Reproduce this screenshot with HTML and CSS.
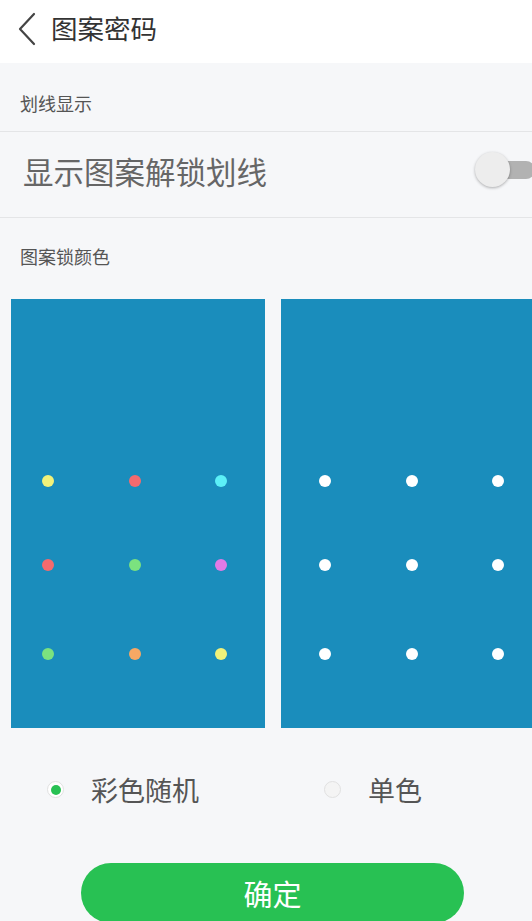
FILE: index.html
```html
<!DOCTYPE html>
<html lang="zh">
<head>
<meta charset="utf-8">
<link rel="stylesheet" href="styles.css">
</head>
<body>
<div class="page">
  <header class="topbar">
    <svg class="back" width="20" height="34" viewBox="0 0 20 34"><path d="M17 2 L3 17 L17 32" fill="none" stroke="#444" stroke-width="2.2" stroke-linecap="round" stroke-linejoin="round"/></svg>
    <span class="title">图案密码</span>
  </header>
  <div class="section-label first">划线显示</div>
  <div class="row">
    <span class="row-text">显示图案解锁划线</span>
    <span class="toggle"><span class="track"></span><span class="knob"></span></span>
  </div>
  <div class="section-label second">图案锁颜色</div>
  <div class="panels">
    <div class="panel left">
      <div class="dots r1"><i style="background:#f1f27a"></i><i style="background:#f46a6e"></i><i style="background:#5cf0f7"></i></div>
      <div class="dots r2"><i style="background:#f46a6e"></i><i style="background:#7be27f"></i><i style="background:#e27ae6"></i></div>
      <div class="dots r3"><i style="background:#7be27f"></i><i style="background:#f7a864"></i><i style="background:#f1f27a"></i></div>
    </div>
    <div class="panel right">
      <div class="dots r1"><i></i><i></i><i></i></div>
      <div class="dots r2"><i></i><i></i><i></i></div>
      <div class="dots r3"><i></i><i></i><i></i></div>
    </div>
  </div>
  <div class="options">
    <div class="opt opt1"><span class="radio on"></span><span class="opt-text">彩色随机</span></div>
    <div class="opt opt2"><span class="radio"></span><span class="opt-text">单色</span></div>
  </div>
  <div class="btn-wrap"><div class="btn">确定</div></div>
</div>
</body>
</html>
```
FILE: styles.css
```css
html, body { margin: 0; padding: 0; }
body {
  width: 532px; height: 921px; overflow: hidden;
  background: #f6f7f9;
  font-family: "Noto Sans CJK SC", "Noto Sans", sans-serif;
}
.page { width: 532px; }
.topbar {
  height: 63px; background: #fff;
  display: flex; align-items: center;
}
.back { margin-left: 17px; margin-right: 14px; margin-top: -6px; }
.title { font-size: 26.5px; color: #333; margin-top: -8px; }
.section-label {
  font-size: 18px; color: #555; padding-left: 20px;
  border-bottom: 1px solid #e4e5e7;
}
.section-label.first { height: 68px; line-height: 80px; }
.section-label.second { height: 80px; line-height: 76px; border-bottom: none; }
.row {
  height: 85px; border-bottom: 1px solid #e4e5e7;
  display: flex; align-items: center; justify-content: space-between;
}
.row-text { font-size: 30.5px; color: #666; padding-left: 23px; margin-top: -8px; }
.toggle { position: relative; width: 58px; height: 36px; margin-top: -10px; margin-right: -1px; }
.track { position: absolute; left: 20px; top: 9px; width: 40px; height: 18px; border-radius: 9px; background: #b2b2b2; }
.knob { position: absolute; left: 0; top: 0; width: 35px; height: 35px; border-radius: 50%; background: #ededed; box-shadow: 0 1px 3px rgba(0,0,0,0.3); }
.panels { display: flex; gap: 16px; padding-left: 11px; padding-top: 1px; }
.panel { height: 429px; background: #1a8dbc; flex: none; padding-top: 176px; box-sizing: border-box; }
.panel.left { width: 254px; padding-left: 31px; }
.panel.right { width: 262px; padding-left: 38px; }
.dots { display: flex; gap: 74.5px; }
.dots i { display: block; width: 12px; height: 12px; border-radius: 50%; background: #fff; }
.dots.r2 { margin-top: 72px; }
.dots.r3 { margin-top: 77px; }
.options { height: 123px; display: flex; align-items: center; }
.opt { display: flex; align-items: center; }
.opt1 { margin-left: 47px; width: 277px; }
.radio { width: 17px; height: 17px; border-radius: 50%; border: 1px solid #e1e1e1; background: #f4f4f4; box-sizing: border-box; position: relative; }
.radio.on { background: #fff; }
.radio.on::after { content: ""; position: absolute; left: 2.5px; top: 2.5px; width: 10px; height: 10px; border-radius: 50%; background: #28c153; }
.opt-text { font-size: 27px; color: #555; }
.opt1 .opt-text { margin-left: 27px; }
.opt2 .opt-text { margin-left: 27px; }
.btn-wrap { padding-top: 12px; padding-left: 81px; }
.btn {
  width: 383px; height: 60px; border-radius: 30px; background: #28c153;
  color: #fff; font-size: 29px; text-align: center; line-height: 60px;
}
```
